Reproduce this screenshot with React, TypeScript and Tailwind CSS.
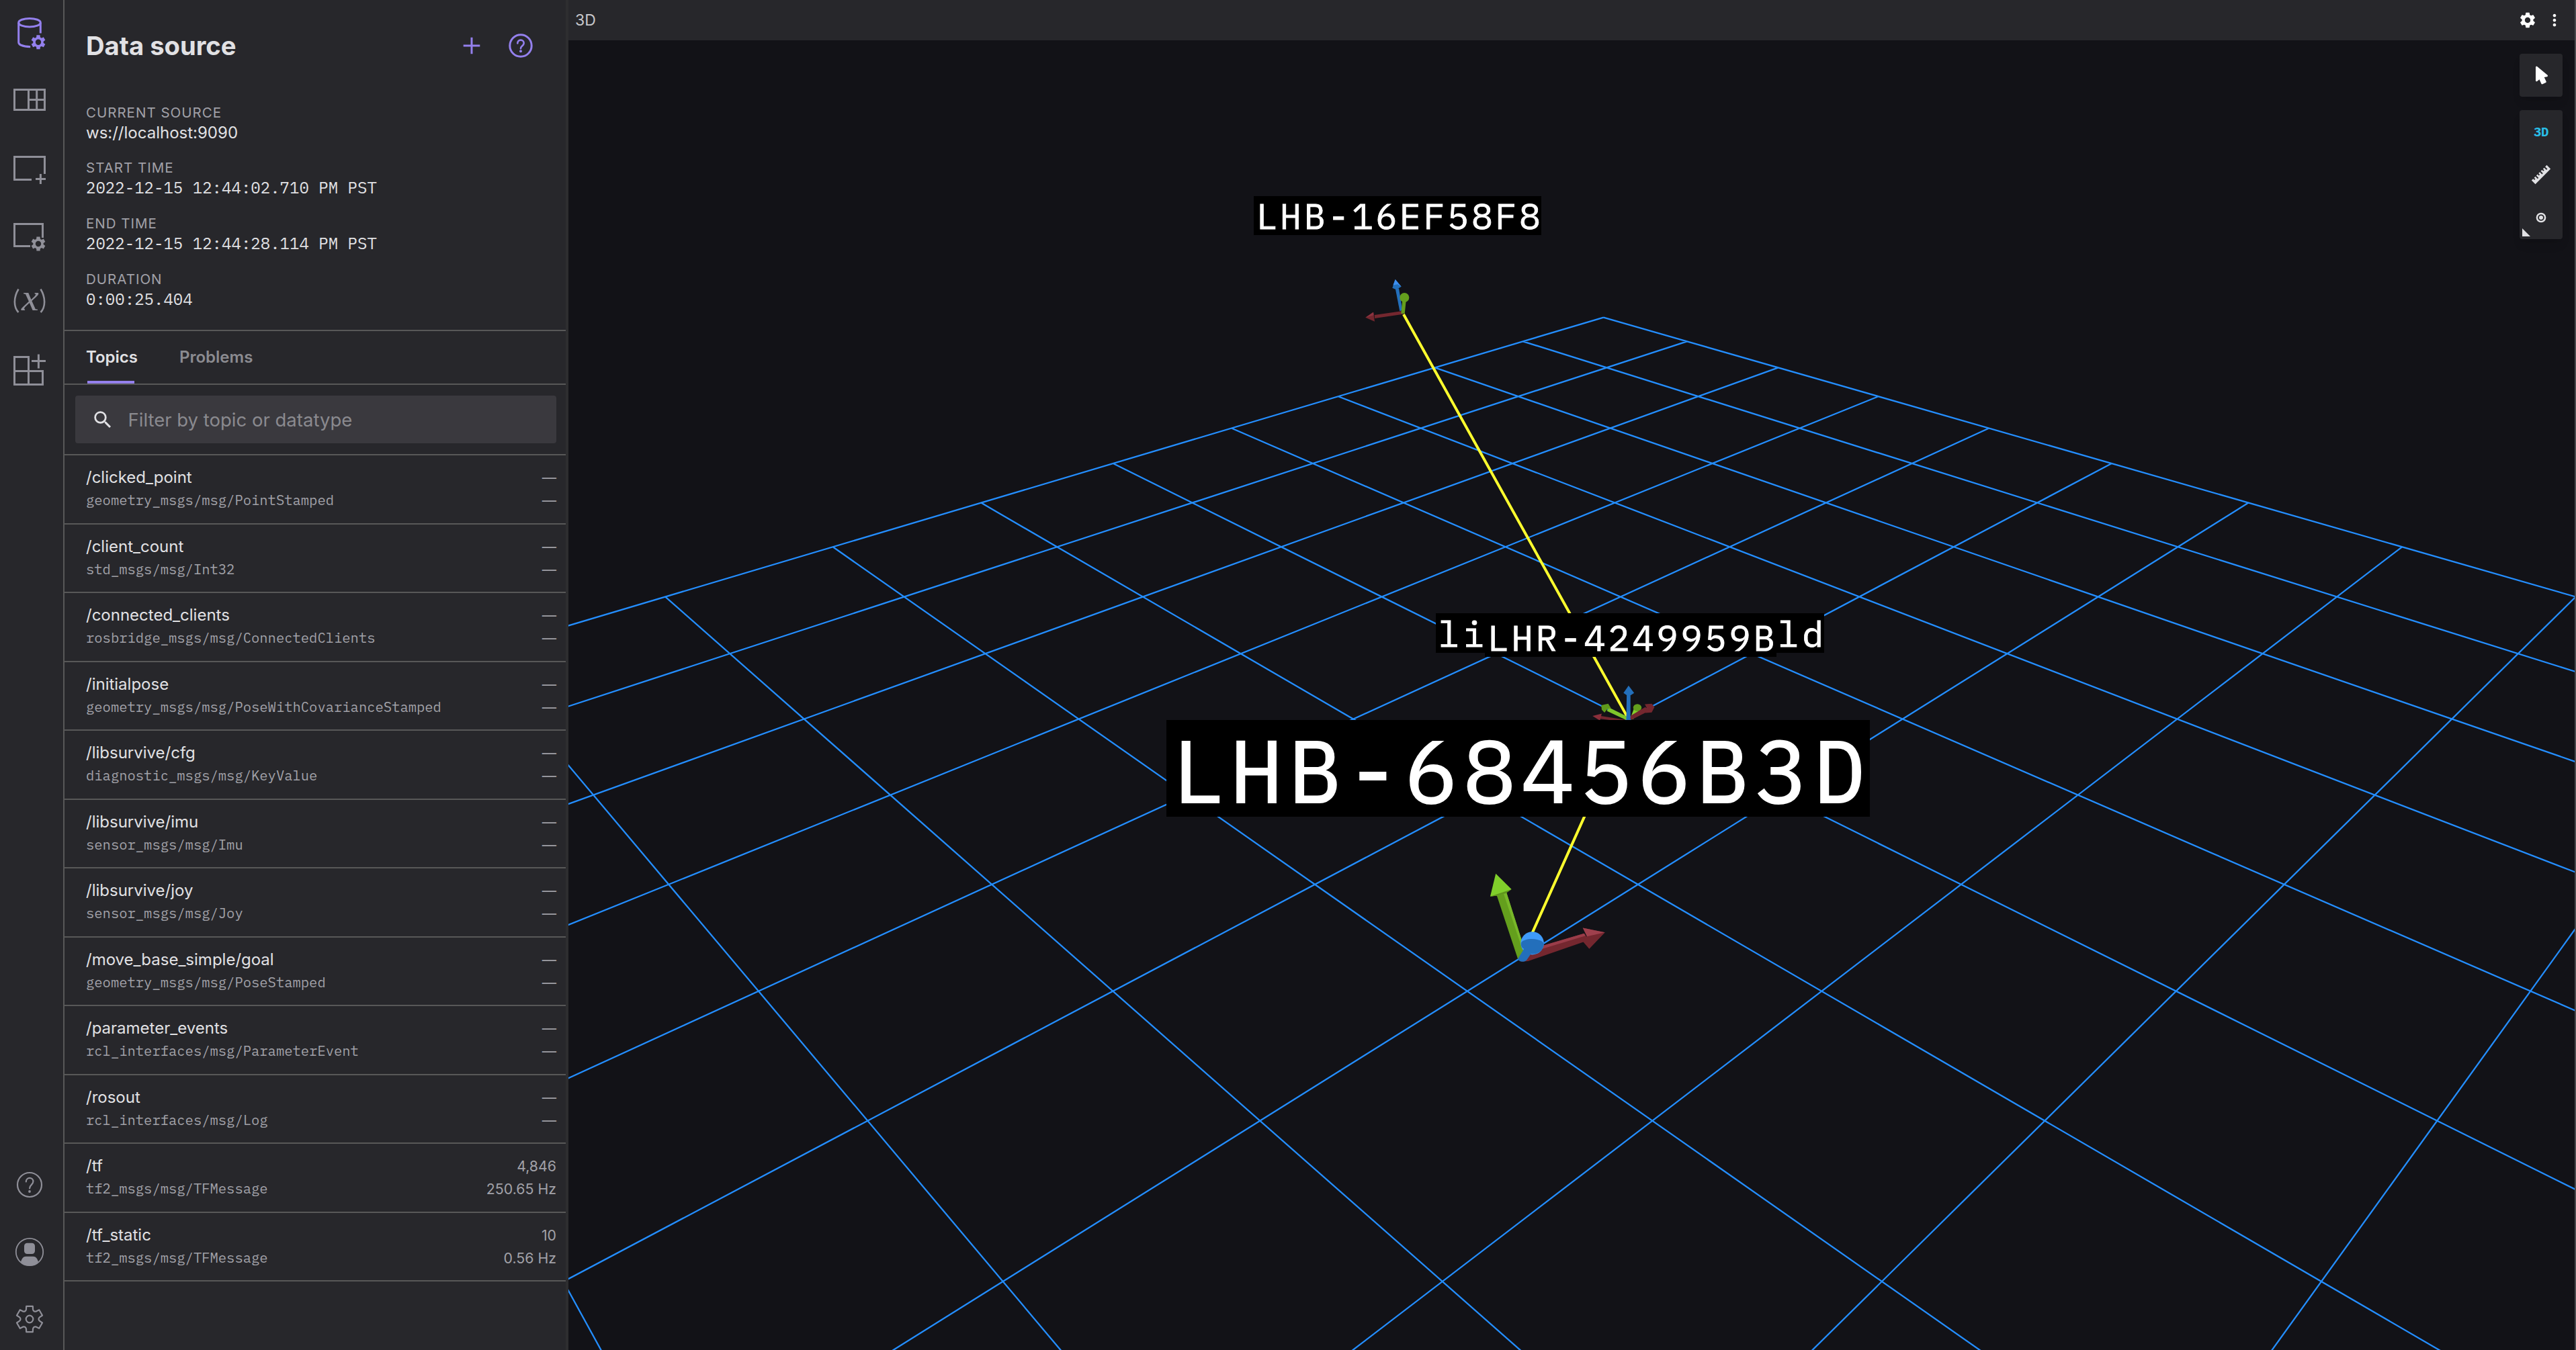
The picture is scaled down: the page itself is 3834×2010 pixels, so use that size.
import React from "react";
import { MdMoreVert, MdSearch, MdSettings } from "react-icons/md";

type Topic = { name: string; type: string; count: string; rate: string };

const topics: Topic[] = [
  { name: "/clicked_point", type: "geometry_msgs/msg/PointStamped", count: "—", rate: "—" },
  { name: "/client_count", type: "std_msgs/msg/Int32", count: "—", rate: "—" },
  { name: "/connected_clients", type: "rosbridge_msgs/msg/ConnectedClients", count: "—", rate: "—" },
  { name: "/initialpose", type: "geometry_msgs/msg/PoseWithCovarianceStamped", count: "—", rate: "—" },
  { name: "/libsurvive/cfg", type: "diagnostic_msgs/msg/KeyValue", count: "—", rate: "—" },
  { name: "/libsurvive/imu", type: "sensor_msgs/msg/Imu", count: "—", rate: "—" },
  { name: "/libsurvive/joy", type: "sensor_msgs/msg/Joy", count: "—", rate: "—" },
  { name: "/move_base_simple/goal", type: "geometry_msgs/msg/PoseStamped", count: "—", rate: "—" },
  { name: "/parameter_events", type: "rcl_interfaces/msg/ParameterEvent", count: "—", rate: "—" },
  { name: "/rosout", type: "rcl_interfaces/msg/Log", count: "—", rate: "—" },
  { name: "/tf", type: "tf2_msgs/msg/TFMessage", count: "4,846", rate: "250.65 Hz" },
  { name: "/tf_static", type: "tf2_msgs/msg/TFMessage", count: "10", rate: "0.56 Hz" },
];

const info = [
  { label: "CURRENT SOURCE", value: "ws://localhost:9090", mono: false },
  { label: "START TIME", value: "2022-12-15 12:44:02.710 PM PST", mono: true },
  { label: "END TIME", value: "2022-12-15 12:44:28.114 PM PST", mono: true },
  { label: "DURATION", value: "0:00:25.404", mono: true },
];

/** Outline of a six-toothed cog centred on (cx, cy). */
function cogPath(cx: number, cy: number, r: number): string {
  const at = (radius: number, deg: number) => {
    const a = ((deg - 90) * Math.PI) / 180;
    return `${(cx + radius * Math.cos(a)).toFixed(2)} ${(cy + radius * Math.sin(a)).toFixed(2)}`;
  };
  let d = "";
  for (let i = 0; i < 6; i++) {
    const t = i * 60;
    d += `${i === 0 ? "M" : "L"}${at(r, t - 14)}L${at(r, t + 14)}L${at(r * 0.78, t + 19)}Q${at(r * 0.6, t + 30)} ${at(r * 0.78, t + 41)}`;
  }
  return d + "Z";
}

function SmallCog({ cx, cy }: { cx: number; cy: number }) {
  return (
    <path
      d={`${cogPath(cx, cy, 10.8)}M${cx + 4.2} ${cy}a4.2 4.2 0 1 0 -8.4 0a4.2 4.2 0 1 0 8.4 0Z`}
      fill="currentColor"
      fillRule="evenodd"
      stroke="none"
    />
  );
}

/* Rail icons share a 60x60 box whose centre is the centre of the rail slot. */
function RailIcon({ children, className }: { children: React.ReactNode; className: string }) {
  return (
    <svg viewBox="0 0 60 60" fill="none" stroke="currentColor" strokeWidth="3" className={`ml-3.5 h-[60px] w-[60px] shrink-0 overflow-visible ${className}`}>
      {children}
    </svg>
  );
}

function Rail() {
  return (
    <nav className="flex w-24 shrink-0 flex-col items-start border-r-2 border-[#585858] text-[#8f8f98]">
      <RailIcon className="mt-5 text-[#9480ed]">
        <ellipse cx="30" cy="13.7" rx="16.3" ry="6.3" />
        <path d="M13.7 13.7V43c0 3.5 6.5 6.3 17.5 6.7M46.3 13.7V29.5" />
        <SmallCog cx={43} cy={42.8} />
      </RailIcon>
      <RailIcon className="mt-10">
        <path d="M7.5 13.5h45v30h-45zM28.5 13.5v30M40.7 13.5v30M28.5 28.6h24" />
      </RailIcon>
      <RailIcon className="mt-11">
        <path d="M33 43.5H7.5V9.500h45V35M39 42.4h15M46.400 34.9v15" />
      </RailIcon>
      <RailIcon className="mt-10">
        <path d="M31 42.5H7.5V9.500h42V30" />
        <SmallCog cx={43} cy={39} />
      </RailIcon>
      <RailIcon className="mt-[35px]">
        <path d="M13.5 11.5C6 24 6 38 13.5 46M46.500 11.5C54 24 54 38 46.500 46" strokeWidth="2.6" />
        <text x="18" y="43" fontSize="58" fontStyle="italic" fill="currentColor" stroke="none" className="font-['Liberation_Serif',serif]">x</text>
      </RailIcon>
      <RailIcon className="mt-[41px]">
        <path d="M7.5 11.5H28.500V52.500H7.500zM7.500 32.500H49.500V52.500H28.500M43.400 7.500v21M33 17.500h21" />
      </RailIcon>

      <RailIcon className="mt-auto">
        <circle cx="30" cy="30" r="18" strokeWidth="2.2" />
        <path d="M24.8 25.500c0-3.300 2.300-5.600 5.300-5.600s5.300 2.200 5.300 5.200c0 4.600-5.200 5-5.300 10.200" strokeWidth="2.2" strokeLinecap="round" />
        <circle cx="30" cy="40" r="1.9" fill="currentColor" stroke="none" />
      </RailIcon>
      <RailIcon className="mt-10">
        <circle cx="30" cy="30" r="20.2" strokeWidth="1.8" />
        <rect x="22" y="16.700" width="16" height="16.300" rx="4.500" fill="currentColor" stroke="none" />
        <path d="M17 44.500c1.500-4.500 3.500-7.800 7.500-7.800h11c4 0 6 3.300 7.500 7.800c-3.500 4-8 6-13 6s-9.500-2-13-6z" fill="currentColor" stroke="none" />
      </RailIcon>
      <RailIcon className="mt-10 mb-4">
        <path d={cogPath(30, 30, 19.8)} strokeWidth="2.2" strokeLinejoin="round" />
        <circle cx="30" cy="30" r="5.3" strokeWidth="2.2" />
      </RailIcon>
    </nav>
  );
}

function Sidebar() {
  return (
    <aside className="flex w-[746px] shrink-0 flex-col">
      <header className="flex h-[136px] items-center pr-[49px] pl-8 text-[#9480ed]">
        <h1 className="grow pt-0.5 text-[38.2px] font-bold text-[#e1e1e4]">Data source</h1>
        <svg viewBox="0 0 26 26" className="mr-[42px] h-[26px] w-[26px]" fill="none" stroke="currentColor" strokeWidth="3">
          <path d="M13 0.700v24.600M0.700 13h24.600" />
        </svg>
        <svg viewBox="0 0 36 36" className="h-9 w-9" fill="none" stroke="currentColor" strokeWidth="3">
          <circle cx="18" cy="18" r="16.2" />
          <path d="M13.300 14.500c0-3 2-4.900 4.700-4.900s4.700 1.900 4.700 4.600c0 3.800-4.700 4.300-4.700 8" strokeLinecap="round" strokeWidth="2.6" />
          <circle cx="18" cy="26.300" r="2" fill="currentColor" stroke="none" />
        </svg>
      </header>

      <dl className="flex h-[355px] flex-col gap-[22.7px] pt-[16.5px] pl-8">
        {info.map((row) => (
          <div key={row.label} className="h-[60px]">
            <dt className="text-[20.5px] leading-[30px] tracking-[1px] text-[#a1a1a8]">{row.label}</dt>
            <dd className={row.mono ? "font-['IBM_Plex_Mono','Liberation_Mono',monospace] text-2xl/[28px] tracking-[0.03px]" : "text-2xl/[30px]"}>{row.value}</dd>
          </div>
        ))}
      </dl>

      <div className="flex h-[82px] gap-[62px] border-y-2 border-[#585858] pl-8 text-2xl font-semibold">
        <div className="relative flex items-center">
          Topics
          <span className="absolute bottom-0 left-0.5 h-1 w-[70px] bg-[#9480ed]" />
        </div>
        <div className="flex items-center text-[#8b8b90]">Problems</div>
      </div>

      <div className="h-[105px] shrink-0 border-b-2 border-[#585858] pt-4 pr-3.5 pl-4">
        <div className="flex h-[71px] items-center rounded-sm bg-[#3a393e] pl-6 text-[27.5px] text-[#8a8a8f]">
          <MdSearch className="mr-[20.5px] h-[34px] w-[34px] text-[#e1e1e4]" />
          <span className="pt-0.5">Filter by topic or datatype</span>
        </div>
      </div>

      <ul>
        {topics.map((t) => (
          <li key={t.name} className="flex h-[102.5px] justify-between border-b-2 border-[#585858] pt-4 pr-3.5 pl-8 whitespace-nowrap">
            <div>
              <div className="text-2xl leading-[34.4px]">{t.name}</div>
              <div className="font-['IBM_Plex_Mono','Liberation_Mono',monospace] text-[20.5px] leading-[34.4px] text-[#a1a1a8]">{t.type}</div>
            </div>
            <div className="text-right text-[21.3px] text-[#a1a1a8]">
              <div className="leading-[34.2px]">{t.count}</div>
              <div className="leading-[34.2px]">{t.rate}</div>
            </div>
          </li>
        ))}
      </ul>
    </aside>
  );
}

/* Perspective projection of the 10x10 ground grid into scene pixels. */
const CELLS = 10;
function project(i: number, j: number): [number, number] {
  const depth = 23.329 - (i + j);
  return [2338.2 + (1129.6 + ((i - j) / 2) * 5448) / depth, -324.4 + 18593.5 / depth];
}

function GroundGrid() {
  const d: string[] = [];
  for (let n = 0; n <= CELLS; n++) {
    const ends = [project(n, 0), project(n, CELLS), project(0, n), project(CELLS, n)];
    const p = ends.map(([x, y]) => `${x.toFixed(1)} ${y.toFixed(1)}`);
    d.push(`M${p[0]}L${p[1]}M${p[2]}L${p[3]}`);
  }
  return <path d={d.join("")} stroke="#248eff" strokeWidth="2.3" fill="none" />;
}

function Scene() {
  return (
    <svg viewBox="846 60 2986 1950" className="absolute inset-0 h-full w-full">
      <GroundGrid />

      <path d="M2089 468L2423.5 1070L2264 1426" fill="none" stroke="#ffff2e" strokeWidth="4" />

      {/* LHB-16EF58F8 frame */}
      <g transform="translate(1840 270) scale(0.33333)">
        <path d="M730 580L711 482L726 478L742 575Z" fill="#236fbb" />
        <path d="M710 438L737 470L714 484L697 476Z" fill="#236fbb" />
        <path d="M710 438L737 470L720 460L700 464Z" fill="#3d8ff0" />
        <path d="M745 593L618 612L617 597L743 579Z" fill="#74272f" />
        <path d="M577 608L612 584L618 626Z" fill="#74272f" />
        <path d="M577 608L612 584L614 598Z" fill="#8c3340" />
        <path d="M736 590L742 530L758 534L752 591Z" fill="#649f1d" />
        <circle cx="751" cy="519" r="21" fill="#649f1d" />
      </g>

      {/* tracker frames at the grid origin */}
      <g transform="translate(1720 880) scale(0.68875 0.35714)">
        <path d="M1012 545L958 532L960 520L1020 538Z" fill="#74272f" />
        <path d="M944 521L964 511L960 540Z" fill="#8a2f3b" />
        <path d="M1016 537L975 500L980 486L1026 530Z" fill="#7fc62b" />
        <path d="M963 476L978 470L984 488L976 492L970 507L964 495Z" fill="#5f9a1b" />
        <path d="M1026 530L1034 488L1046 492L1032 535Z" fill="#83cf2c" />
        <ellipse cx="1041" cy="486" rx="9" ry="15" fill="#649f1d" />
        <path d="M1022 525L1058 484L1068 498L1028 537Z" fill="#74272f" />
        <path d="M1057 472L1072 470L1078 484L1072 506L1058 508L1062 490Z" fill="#74272f" />
        <path d="M1017 540L1018 430H1026V540Z" fill="#236fbb" />
        <path d="M1022 394L1034 425L1027 434H1018L1011 425Z" fill="#236fbb" />
      </g>

      {/* LHB-68456B3D frame */}
      <g transform="translate(1720 880) scale(0.68875 0.35714)">
        <path d="M830 1482L926 1427L936 1455L805 1543L790 1545Z" fill="#74272f" />
        <path d="M830 1482L926 1427L929 1437L832 1494Z" fill="#9a3c49" />
        <path d="M923 1404L971 1423L937 1492L921 1456L933 1438Z" fill="#74272f" />
        <path d="M923 1404L971 1423L932 1440Z" fill="#9f404d" />
        <path d="M736 1262L758 1256L797 1490L792 1540L783 1535Z" fill="#649f1d" />
        <path d="M751 1256L758 1256L795 1480L793 1496Z" fill="#78b829" />
        <path d="M735 1178L769 1243L755 1260L738 1270L723 1273Z" fill="#80cf2b" />
        <path d="M723 1273L769 1243L757 1260L738 1270Z" fill="#5f961c" />
        <ellipse cx="814" cy="1468" rx="25" ry="48" fill="#3f9bfa" />
        <path d="M790 1466C796 1445 832 1445 839 1470C838 1500 826 1516 811 1513L802 1538C796 1550 784 1546 783 1532L796 1492C790 1486 789 1475 790 1466Z" fill="#236fbb" />
      </g>
    </svg>
  );
}

const labelBase =
  "absolute bg-black font-['IBM_Plex_Mono','Liberation_Mono',monospace] whitespace-nowrap text-white";

function ToolGroup() {
  return (
    <div className="absolute top-5 right-[18px] flex w-16 flex-col gap-5">
      <button className="flex h-16 items-center justify-center rounded bg-[#27272b] text-white shadow-lg">
        <svg viewBox="0 0 24 24" className="h-8 w-8" fill="currentColor">
          <path d="M13.640 21.970C13.140 22.210 12.540 22 12.310 21.500L10.130 16.760L7.620 18.780C7.450 18.920 7.240 19 7 19A1 1 0 0 1 6 18V3A1 1 0 0 1 7 2C7.240 2 7.470 2.090 7.640 2.230L19.140 11.860C19.570 12.220 19.620 12.850 19.270 13.270C19.120 13.450 18.910 13.570 18.700 13.610L15.540 14.230L17.740 18.960C18 19.460 17.760 20.050 17.260 20.280L13.640 21.970Z" />
        </svg>
      </button>
      <div className="relative flex flex-col rounded bg-[#27272b] text-[#e1e1e4] shadow-lg">
        <button className="h-16 font-['IBM_Plex_Mono','Liberation_Mono',monospace] text-[19px] font-bold tracking-[-0.5px] text-[#29bee7]">3D</button>
        <button className="flex h-16 items-center justify-center">
          <svg viewBox="0 0 24 24" className="h-8 w-8" fill="currentColor">
            <path d="M1.390 18.360L3.160 16.600L4.580 18L5.640 16.950L4.220 15.540L5.640 14.120L8.110 16.600L9.170 15.540L6.700 13.060L8.110 11.650L9.530 13.060L10.590 12L9.170 10.590L10.590 9.170L13.060 11.650L14.120 10.590L11.650 8.110L13.060 6.700L14.470 8.110L15.540 7.050L14.120 5.640L15.540 4.220L18 6.700L19.070 5.640L16.600 3.160L18.360 1.390L22.610 5.640L5.640 22.610L1.390 18.360Z" />
          </svg>
        </button>
        <button className="flex h-16 items-center justify-center">
          <svg viewBox="0 0 16 16" className="h-4 w-4">
            <circle cx="8" cy="8" r="6.1" fill="none" stroke="currentColor" strokeWidth="2.5" />
            <circle cx="8" cy="8" r="3" fill="currentColor" />
          </svg>
        </button>
        <svg viewBox="0 0 12 12" className="absolute bottom-1 left-1 h-3 w-3" fill="currentColor">
          <path d="M0 0L12 12H0Z" />
        </svg>
      </div>
    </div>
  );
}

export default function App() {
  return (
    <div className="flex h-[2010px] w-[3834px] overflow-hidden bg-[#27272b] font-['Inter',sans-serif] text-[#e1e1e4]">
      <Rail />
      <Sidebar />
      <div className="w-1 shrink-0 bg-[#2e2e30]" />
      <main className="flex min-w-0 grow flex-col border-r-2 border-[#4a4a4d]">
        <header className="flex h-[60px] shrink-0 items-center bg-[#27272b] pr-4 pl-2.5">
          <span className="grow text-[23px] text-[#c8c8cc]">3D</span>
          <MdSettings className="mr-3 h-7 w-7 text-white" />
          <MdMoreVert className="h-7 w-7 text-white" />
        </header>
        <div className="relative grow overflow-hidden bg-[#121217]">
          <Scene />
          <div className={`${labelBase} top-[232px] left-[1020px] h-[58px] w-[428px] pl-[3.5px] text-[53px] leading-[59px] tracking-[3.8px] [-webkit-text-stroke:0.8px_white]`}>LHB-16EF58F8</div>
          <div className={`${labelBase} top-[853px] left-[1291px] h-[59px] w-[578px] pl-[3.7px] text-[53.5px] leading-[61px] tracking-[4px] [-webkit-text-stroke:0.8px_white]`}>libsurvive_world</div>
          <div className={`${labelBase} top-[859px] left-[1364px] h-[59px] w-[434px] pl-[3.6px] text-[53.5px] leading-[61px] tracking-[3.9px] [-webkit-text-stroke:0.8px_white]`}>LHR-4249959B</div>
          <div className={`${labelBase} top-[1012px] left-[890px] h-[144px] w-[1047px] pl-2 text-[131px] leading-[148px] tracking-[8.1px] [-webkit-text-stroke:2px_white]`}>LHB-68456B3D</div>
          <ToolGroup />
        </div>
      </main>
    </div>
  );
}
